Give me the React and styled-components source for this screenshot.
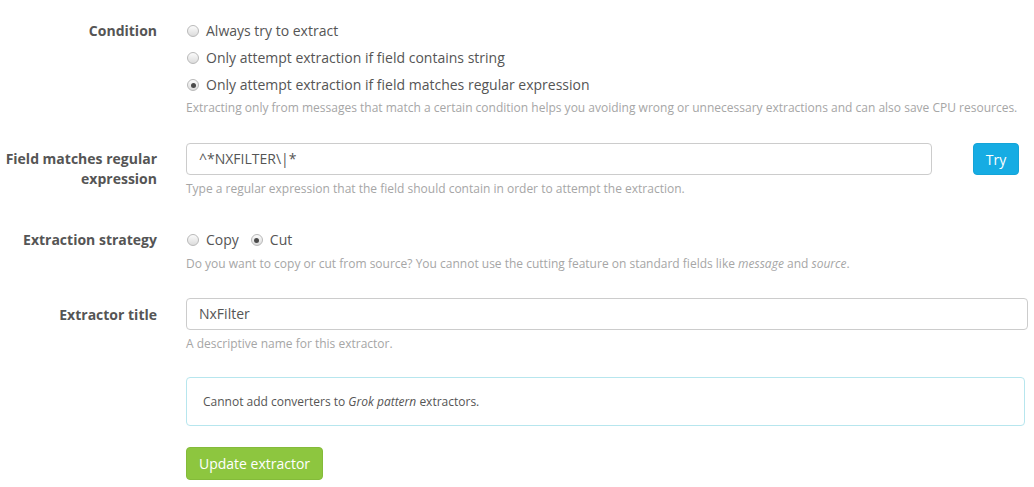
import { createGlobalStyle, styled } from "styled-components";

const GlobalStyle = createGlobalStyle`
  body {
    margin: 0;
    background: #fff;
    font-family: "Open Sans", "Liberation Sans", sans-serif;
    color: #555;
  }
`;

const App = () => {
  return (
    <>
      <GlobalStyle />
      <Form>
        <Group $mb={27}>
          <Label>Condition</Label>
          <Controls>
            <RadioStack>
              <Radio>
                <Dot />
                Always try to extract
              </Radio>
              <Radio>
                <Dot />
                Only attempt extraction if field contains string
              </Radio>
              <Radio>
                <Dot $checked />
                Only attempt extraction if field matches regular expression
              </Radio>
            </RadioStack>
            <Help $mt={4}>
              Extracting only from messages that match a certain condition helps you avoiding wrong or
              unnecessary extractions and can also save CPU resources.
            </Help>
          </Controls>
        </Group>

        <Group $mb={26}>
          <Label $pt={6}>
            Field matches regular
            <br />
            expression
          </Label>
          <Controls>
            <InputRow>
              <Input $width={746}>^*NXFILTER\|*</Input>
              <TryButton>Try</TryButton>
            </InputRow>
            <Help>Type a regular expression that the field should contain in order to attempt the extraction.</Help>
          </Controls>
        </Group>

        <Group $mb={26}>
          <Label>Extraction strategy</Label>
          <Controls>
            <RadioInline>
              <Radio>
                <Dot />
                Copy
              </Radio>
              <Radio>
                <Dot $checked />
                Cut
              </Radio>
            </RadioInline>
            <Help>
              Do you want to copy or cut from source? You cannot use the cutting feature on standard fields like{" "}
              <em>message</em> and <em>source</em>.
            </Help>
          </Controls>
        </Group>

        <Group $mb={25}>
          <Label>Extractor title</Label>
          <Controls>
            <Input $width={842}>NxFilter</Input>
            <Help>A descriptive name for this extractor.</Help>
          </Controls>
        </Group>

        <Group $mb={21}>
          <span />
          <Controls>
            <InfoBox>
              Cannot add converters to <em>Grok pattern</em> extractors.
            </InfoBox>
          </Controls>
        </Group>

        <Group $mb={0}>
          <span />
          <Controls>
            <UpdateButton>Update extractor</UpdateButton>
          </Controls>
        </Group>
      </Form>
    </>
  );
};

const Form = styled.div`
  padding-top: 14px;
  width: 1034px;
  overflow: hidden;
`;

const Group = styled.div`
  display: grid;
  grid-template-columns: 157px 1fr;
  column-gap: 29px;
  margin-bottom: ${({ $mb }) => $mb}px;
`;

const Label = styled.div`
  text-align: right;
  font-weight: 700;
  font-size: 14px;
  line-height: 20px;
  color: #555;
  padding-top: ${({ $pt }) => ($pt === undefined ? 7 : $pt)}px;
`;

const Controls = styled.div`
  display: flex;
  flex-direction: column;
  align-items: flex-start;
  min-width: 0;
`;

const RadioStack = styled.div`
  display: flex;
  flex-direction: column;
  gap: 7px;
  padding-top: 7px;
`;

const RadioInline = styled.div`
  display: flex;
  gap: 11px;
  padding-top: 7px;
`;

const Radio = styled.label`
  display: flex;
  align-items: center;
  gap: 7px;
  font-size: 14px;
  line-height: 20px;
  color: #555;
  white-space: nowrap;
  padding-left: 1px;
`;

const Dot = styled.span`
  position: relative;
  width: 12px;
  height: 12px;
  box-sizing: border-box;
  border-radius: 50%;
  border: 1px solid #b9b9b9;
  background: linear-gradient(#fbfbfb, #dcdcdc);
  flex-shrink: 0;
  &::after {
    content: "";
    display: ${({ $checked }) => ($checked ? "block" : "none")};
    position: absolute;
    left: 2.5px;
    top: 2.5px;
    width: 5px;
    height: 5px;
    border-radius: 50%;
    background: #4a4a4a;
  }
`;

const Help = styled.div`
  margin-top: ${({ $mt }) => ($mt === undefined ? 5 : $mt)}px;
  font-size: 12px;
  line-height: 17px;
  color: #a6a6a6;
  white-space: nowrap;
  em {
    font-style: italic;
  }
`;

const InputRow = styled.div`
  display: flex;
  align-items: center;
  gap: 41px;
`;

const Input = styled.div`
  box-sizing: border-box;
  width: ${({ $width }) => $width}px;
  height: 32px;
  padding: 0 12px;
  border: 1px solid #ccc;
  border-radius: 4px;
  font-size: 14px;
  line-height: 30px;
  color: #555;
  flex-shrink: 0;
`;

const TryButton = styled.button`
  box-sizing: border-box;
  width: 46px;
  height: 32px;
  border: 1px solid #14a4d8;
  border-radius: 4px;
  background: #16ace3;
  color: #fff;
  font-family: "Open Sans", "Liberation Sans", sans-serif;
  font-size: 14px;
  padding: 0;
  flex-shrink: 0;
`;

const InfoBox = styled.div`
  box-sizing: border-box;
  width: 839px;
  height: 49px;
  padding: 0 16px;
  border: 1px solid #b7e6ee;
  border-radius: 4px;
  background: #fff;
  font-size: 12px;
  line-height: 47px;
  color: #555;
  em {
    font-style: italic;
  }
`;

const UpdateButton = styled.button`
  box-sizing: border-box;
  width: 137px;
  height: 33px;
  border: 1px solid #84bb3a;
  border-radius: 4px;
  background: #8dc63f;
  color: #fff;
  font-family: "Open Sans", "Liberation Sans", sans-serif;
  font-size: 14px;
  padding: 0;
`;

export default App;
